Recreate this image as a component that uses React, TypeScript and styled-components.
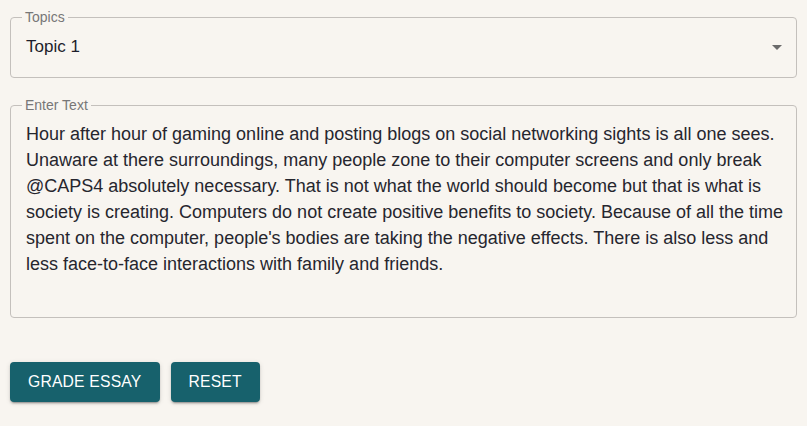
import React from "react";
import styled, { createGlobalStyle } from "styled-components";

const Global = createGlobalStyle`
  html, body { margin: 0; padding: 0; background: #f8f5f0; }
  body { font-family: "Liberation Sans", Arial, sans-serif; }
  * { box-sizing: border-box; }
`;

const Page = styled.div`
  width: 807px;
  height: 426px;
  padding: 10px 10px 0 10px;
  display: flex;
  flex-direction: column;
`;

const Field = styled.fieldset<{ $height: number }>`
  margin: 0;
  padding: 0 15px 0 15px;
  height: ${(p) => p.$height}px;
  border: 1px solid #c4c0bc;
  border-radius: 4px;
  min-width: 0;
  display: flex;
  flex-direction: column;
`;

const Legend = styled.legend`
  font-family: "Liberation Sans", Arial, sans-serif;
  font-size: 14px;
  line-height: 14px;
  color: #777777;
  padding: 0 3px;
  margin-left: -4px;
`;

const SelectRow = styled.div`
  display: flex;
  align-items: center;
  justify-content: space-between;
  height: 46px;
  margin-right: -8px;
`;

const SelectValue = styled.span`
  font-size: 17px;
  color: #1d1d2b;
`;

const Arrow = styled.svg`
  width: 24px;
  height: 24px;
  fill: #6b6b6b;
`;

const Essay = styled.div`
  font-size: 18px;
  line-height: 26px;
  color: #26262e;
  padding-top: 9px;
  margin-right: -10px;
`;

const Buttons = styled.div`
  display: flex;
  gap: 11px;
  margin-top: 44px;
`;

const Button = styled.button`
  height: 40px;
  padding: 0 18px;
  border: none;
  border-radius: 4px;
  background: #17616c;
  color: #ffffff;
  font-family: "Liberation Sans", Arial, sans-serif;
  font-size: 15.7px;
  letter-spacing: 0.2px;
  text-transform: uppercase;
  box-shadow: 0 3px 1px -2px rgba(0,0,0,0.2), 0 2px 2px 0 rgba(0,0,0,0.14), 0 1px 5px 0 rgba(0,0,0,0.12);
  cursor: pointer;
`;

const Spacer = styled.div<{ $h: number }>`
  height: ${(p) => p.$h}px;
`;

const essay =
  "Hour after hour of gaming online and posting blogs on social networking sights is all one sees. Unaware at there surroundings, many people zone to their computer screens and only break @CAPS4 absolutely necessary. That is not what the world should become but that is what is society is creating. Computers do not create positive benefits to society. Because of all the time spent on the computer, people's bodies are taking the negative effects. There is also less and less face-to-face interactions with family and friends.";

export default function App() {
  return (
    <>
      <Global />
      <Page>
        <Field $height={68}>
          <Legend>Topics</Legend>
          <SelectRow>
            <SelectValue>Topic 1</SelectValue>
            <Arrow viewBox="0 0 24 24">
              <path d="M7 10l5 5 5-5z" />
            </Arrow>
          </SelectRow>
        </Field>
        <Spacer $h={20} />
        <Field $height={220}>
          <Legend>Enter Text</Legend>
          <Essay>{essay}</Essay>
        </Field>
        <Buttons>
          <Button>Grade Essay</Button>
          <Button>Reset</Button>
        </Buttons>
      </Page>
    </>
  );
}
